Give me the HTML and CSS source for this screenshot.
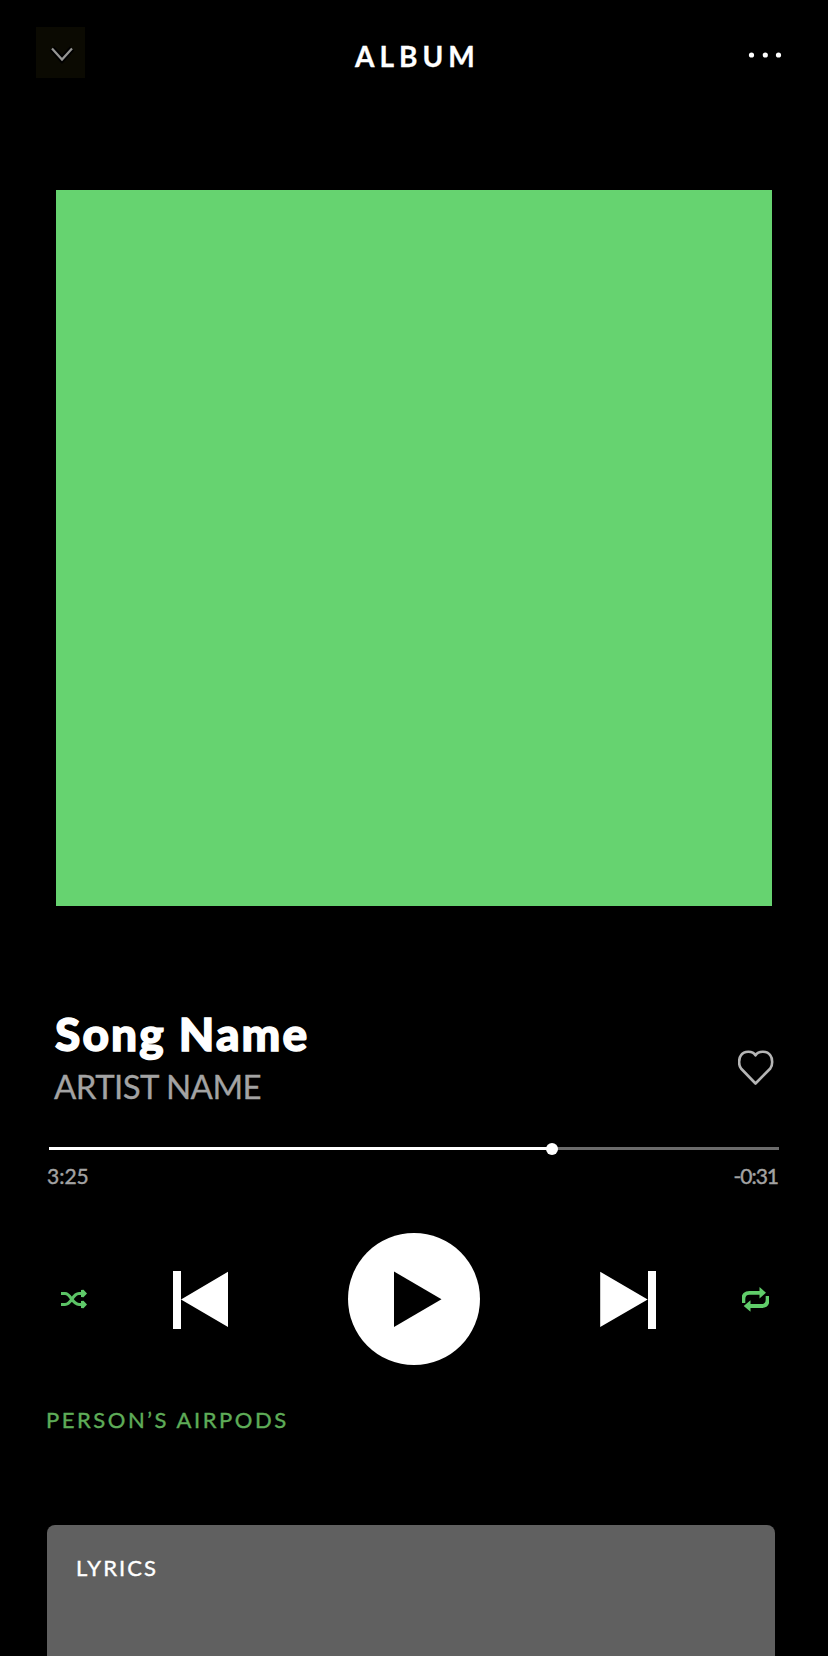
FILE: index.html
```html
<!DOCTYPE html>
<html lang="en">
<head>
<meta charset="utf-8">
<title>Album</title>
<link rel="stylesheet" href="styles.css">
</head>
<body>
<main class="player">
  <header class="topbar">
    <button class="collapse" aria-label="Collapse"><svg width="49" height="51" viewBox="0 0 49 51"><path d="M16 21.500 26 32.500 36 21.500" fill="none" stroke="#000" stroke-width="6"/><path d="M16 21.500 26 32.500 36 21.500" fill="none" stroke="#959593" stroke-width="2.200"/></svg></button>
    <h1 class="heading">ALBUM</h1>
    <button class="more" aria-label="More"><svg width="34" height="8" viewBox="0 0 34 8" fill="#fff"><circle cx="3.500" cy="4" r="2.600"/><circle cx="17.300" cy="4" r="2.600"/><circle cx="30.500" cy="4" r="2.600"/></svg></button>
  </header>
  <div class="cover"></div>
  <section class="track">
    <div class="names">
      <h2 class="song">Song Name</h2>
      <p class="artist">ARTIST NAME</p>
    </div>
    <button class="like" aria-label="Like"><svg width="36" height="36" viewBox="0 0 36 36"><path d="M17.500 33.500 3 18.500C.5 15.500.5 8.500 3 5.300 6 .8 14.500.3 17.500 5.300 20.500.3 29.500.8 32.300 5.300 34.800 8.500 34.800 15.500 32.300 18.500Z" fill="none" stroke="#b5b5b5" stroke-width="2.600" stroke-linejoin="round"/></svg></button>
  </section>
  <div class="progress"><div class="elapsed"></div><div class="knob"></div></div>
  <div class="times"><span class="time-start">3:25</span><span class="time-left">-0:31</span></div>
  <nav class="controls">
    <button aria-label="Shuffle"><svg class="shuffle" width="28" height="20" viewBox="0 0 28 20"><g fill="none" stroke="#5bc265" stroke-width="3.200"><path d="M0 4.500H4C10 4.500 11 15.500 18 15.500H22M0 15.500H4C11 15.500 11 4.500 18 4.500H22"/></g><path d="M20 1 22.500 .8 26 4.500 22.500 8.200 20 8ZM20 12 22.500 11.800 26 15.500 22.500 19.200 20 19Z" fill="#5fca69"/></svg></button>
    <button class="skip" aria-label="Previous"><svg class="previous" width="55" height="58" viewBox="0 0 55 58" fill="#fff"><path d="M0 0H8V58H0ZM8 28.500 55 .8V56Z"/></svg></button>
    <button aria-label="Play"><svg class="play" width="132" height="132" viewBox="0 0 132 132"><circle cx="66" cy="66" r="66" fill="#fff"/><path d="M46 38.500 93.500 66.300 46 94Z"/></svg></button>
    <button class="skip" aria-label="Next"><svg class="next" width="56" height="58" viewBox="0 0 56 58" fill="#fff"><path d="M48 0H56V58H48ZM47.700 28.500.2.800V56Z"/></svg></button>
    <button aria-label="Repeat"><svg class="repeat" width="27" height="26" viewBox="0 0 27 26"><g fill="none" stroke="#60cd6a" stroke-width="3.800"><path d="M1.400 17V13Q1.400 6.800 7.500 6.800H19M25.600 10V13.500Q25.600 20 19.500 20H8"/></g><path d="M17.500 1 24 6.800 17.500 12.500ZM8.500 14.300 1.700 20 8.500 25.700Z" fill="#60cd6a"/></svg></button>
  </nav>
  <p class="device">PERSON’S AIRPODS</p>
  <section class="lyrics"><h3 class="lyrics-title">LYRICS</h3></section>
</main>
</body>
</html>
```
FILE: styles.css
```css
* { box-sizing: border-box; }
html, body { margin: 0; background: #000; }
body { height: 1656px; overflow: hidden; font-family: Lato, sans-serif; color: #fff; }
h1, h2, h3, p { margin: 0; }
button { display: block; padding: 0; border: 0; background: none; }
svg { display: block; }
.player { display: flex; flex-direction: column; height: 1656px; }
.topbar { display: grid; grid-template-columns: 49px 1fr 34px; align-items: center; height: 51px; margin: 27px 46px 0 36px; }
.collapse { background: #0b0a02; }
.heading { padding: 6px 0 0 270px; font-size: 28px; line-height: 34px; font-weight: 700; letter-spacing: 5px; -webkit-text-stroke: 0.3px; }
.more { padding-top: 4px; }
.cover { width: 716px; height: 716px; margin: 112px 0 0 56px; background: #66d370; }
.track { display: flex; justify-content: space-between; height: 124px; margin: 106px 54px 0 54px; }
.song { font-size: 46px; line-height: 54px; font-weight: 900; letter-spacing: 2.1px; margin: -5px 0 0 1px; -webkit-text-stroke: 1.4px; }
.artist { font-size: 33px; line-height: 40px; margin-top: 5px; letter-spacing: -0.55px; color: #a3a3a3; -webkit-text-stroke: 0.3px; }
.like { height: 36px; margin-top: 38px; }
.progress { position: relative; height: 3px; margin: 11px 49px 0; background: #6b6b6b; }
.elapsed { width: 503px; height: 3px; background: #fff; }
.knob { position: absolute; left: 497px; top: -4px; width: 12px; height: 12px; border-radius: 50%; background: #fff; }
.times { display: flex; justify-content: space-between; height: 26px; margin: 13px 50px 0 47px; font-size: 21px; line-height: 26px; color: #a3a3a3; -webkit-text-stroke: 0.4px; }
.time-left { letter-spacing: -1px; }
.controls { display: grid; grid-template-columns: 112px 175px 252px 142px 28px; align-items: center; height: 132px; margin: 44px 0 0 61px; }
.skip { padding-top: 2px; }
.device { margin: 41px 0 0 46px; font-size: 22px; line-height: 28px; letter-spacing: 2.55px; color: #5eac58; -webkit-text-stroke: 0.4px; }
.lyrics { flex: 1; margin: 91px 53px 0 47px; padding: 29px; border-radius: 8px 8px 0 0; background: #606060; }
.lyrics-title { font-size: 22px; line-height: 28px; font-weight: 400; letter-spacing: 2.1px; -webkit-text-stroke: 0.4px; }
```
